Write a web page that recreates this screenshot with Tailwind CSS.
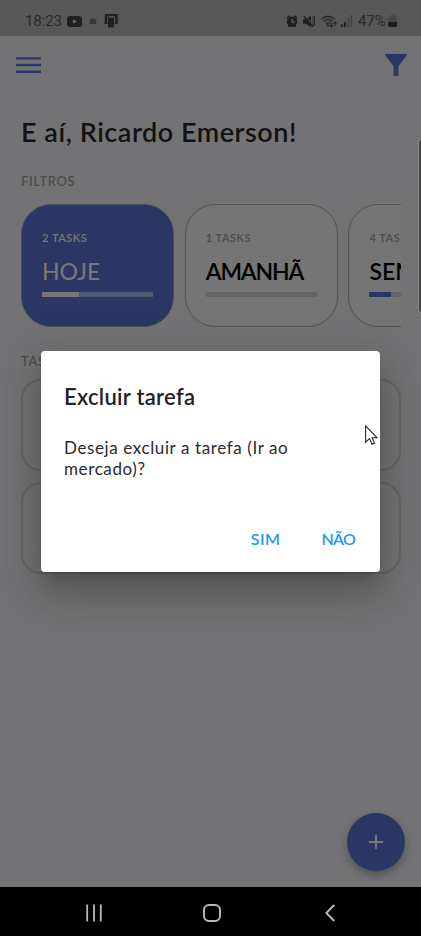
<!DOCTYPE html>
<html lang="pt-BR">
<head>
<meta charset="utf-8">
<meta name="viewport" content="width=device-width">
<title>Tarefas</title>
<script src="https://cdn.jsdelivr.net/npm/@tailwindcss/browser@4"></script>
</head>
<body class="overflow-hidden">
<div class="relative flex h-[936px] w-[421px] flex-col overflow-hidden bg-[#737375] font-['Lato','Noto_Sans',sans-serif] whitespace-nowrap">
  <!-- status bar -->
  <header class="flex h-9 shrink-0 items-center bg-[#575758] pt-[6px] pl-[25px] pr-[24px] font-['Roboto',sans-serif] text-[15px] text-[#2b2b2c]">
    <span class="w-[42px] tracking-[-0.1px]">18:23</span>
    <svg class="h-[11px] w-[15px]" viewBox="0 0 15 11"><rect width="15" height="11" rx="3" fill="#202021"/><path d="M5.8 3.2v4.6l4-2.3z" fill="#6a6a6b"/></svg>
    <svg class="ml-[7px] h-[7px] w-[8px]" viewBox="0 0 8 7"><path d="M1 3Q2 .5 4 1Q7 .5 7 3M1 3.4h6M.5 5.4h7M2 1v5M4 1v5M6 2v4" stroke="#303031" fill="none"/></svg>
    <svg class="ml-[7px] h-[14px] w-[14px]" viewBox="0 0 14 14"><path d="M2 9V1.200h10.500V9" fill="none" stroke="#202021" stroke-width="2.400"/><path d="M0 9.200h4M10.500 9.200h3.500" stroke="#202021" stroke-width="1.300"/><path d="M4 3h6v10.500h-6z" fill="#202021"/><path d="M5 3h4.500" stroke="#69696a"/></svg>
    <span class="grow"></span>
    <svg class="h-[13px] w-[12px]" viewBox="0 0 12 13"><path d="M.8 3.200l3-2.400M11.200 3.200l-3-2.400M2.500 12l1-2M9.500 12l-1-2" stroke="#202021" stroke-width="1.600"/><circle cx="6" cy="6.800" r="5.200" fill="#202021"/><path d="M6 4v3.200h2.500" stroke="#777" fill="none"/></svg>
    <svg class="ml-[5px] h-[13px] w-[12px]" viewBox="0 0 12 13"><path d="M0 4.300h3L8 .8v11.500L3 8.800H0z" fill="#202021"/><path d="M1.800 1l9 10.500" stroke="#575758" stroke-width="1.200"/><path d="M.8 1.200l9.500 10.500" stroke="#202021" stroke-width="1.500"/><path d="M9.500 1l1.200 1.700L9.500 4.400l1.200 1.700L9.500 8l1.200 2M11.500 1v10" stroke="#29292a" fill="none"/></svg>
    <svg class="ml-[6px] h-[13px] w-[16px]" viewBox="0 0 16 13"><path d="M.6 4.300Q7-1.600 13.400 4.300M2.800 6.500Q7 2.500 11.200 6.300M5 8.700Q7 6.700 9 8.500" fill="none" stroke="#29292a" stroke-width="1.400"/><circle cx="7" cy="10.500" r="1.200" fill="#29292a"/><path d="M10.400 7.500v4.300M8.900 10.200l1.500 1.900 1.500-1.900M14 11V7M12.500 8.800L14 6.800l1.500 2" fill="none" stroke="#29292a" stroke-width="1.100"/></svg>
    <svg class="ml-[4px] h-[12px] w-[12px]" viewBox="0 0 12 12"><path d="M1 12V9.500M4 12V6.700" stroke="#202021" stroke-width="1.800"/><path d="M7.400 12V3.800M10.400 12V0" stroke="#414142" stroke-width="1.600"/></svg>
    <span class="ml-[5px] w-[30px]">47%</span>
    <svg class="h-[12px] w-[9px]" viewBox="0 0 9 12"><path d="M2.500 0h4v1.500H9V10q0 2-2 2H2q-2 0-2-2V1.500h2.500z" fill="#464647"/><path d="M0 7h9v3q0 2-2 2H2q-2 0-2-2z" fill="#1b1b1c"/></svg>
  </header>
  <!-- app bar -->
  <nav class="flex h-[60px] shrink-0 items-start justify-between pr-3.5 pl-4">
    <svg class="mt-[21px] h-[16px] w-[25px]" viewBox="0 0 25 16"><path d="M0 1.400h25M0 8h25M0 14.700h25" stroke="#2a3663" stroke-width="2.400"/></svg>
    <svg class="mt-[18px] h-[22px] w-[22px]" viewBox="0 0 22 22"><path d="M.7 0h20.600q.9.500.4 1.400L13.500 12v10H8.500V12L.3 1.400Q-.2.500.7 0z" fill="#2a3663"/></svg>
  </nav>
  <main class="flex grow flex-col px-[21px]">
    <h1 class="mt-[18px] h-9 text-[27px] leading-9 font-semibold tracking-[0.53px] text-[#121213]">E aí, Ricardo Emerson!</h1>
    <h2 class="mt-[22px] h-[18px] text-[13px] leading-[18px] font-semibold tracking-[0.6px] text-[#4c4c4d]">FILTROS</h2>
    <div class="mt-[14px] flex h-[123px] w-[380px] shrink-0 gap-[10.7px] overflow-hidden">
      <article class="h-[123px] w-[153px] shrink-0 rounded-[30px] border border-[#4c4e56] bg-[#2a3663] px-[20px] pt-[25px]">
        <p class="h-4 text-[11px] leading-4 font-semibold tracking-[0.55px] text-[#7a7a7a]">2 TASKS</p>
        <h3 class="mt-[11px] h-7 text-[23px] leading-7 font-medium text-[#777776]">HOJE</h3>
        <div class="mt-[6.500px] h-[5px] w-[111px] bg-[#4c5c74]"><div class="h-full w-[37px] bg-[#777776]"></div></div>
      </article>
      <article class="h-[123px] w-[153px] shrink-0 rounded-[30px] border border-[#535354] bg-[#757576] px-[20px] pt-[25px]">
        <p class="h-4 text-[11px] leading-4 font-semibold tracking-[0.55px] text-[#4c4c4d]">1 TASKS</p>
        <h3 class="mt-[11px] h-7 text-[23px] leading-7 font-semibold tracking-[-1.1px] text-black">AMANHÃ</h3>
        <div class="mt-[6.500px] h-[5px] w-[111px] bg-[#656566]"></div>
      </article>
      <article class="h-[123px] w-[153px] shrink-0 rounded-[30px] border border-[#535354] bg-[#757576] px-[20px] pt-[25px]">
        <p class="h-4 text-[11px] leading-4 font-semibold tracking-[0.55px] text-[#4c4c4d]">4 TASKS</p>
        <h3 class="mt-[11px] h-7 text-[23px] leading-7 font-semibold text-black">SEMANA</h3>
        <div class="mt-[6.500px] h-[5px] w-[111px] bg-[#656566]"><div class="h-full w-[22px] bg-[#2a3663]"></div></div>
      </article>
    </div>
    <h2 class="mt-[25px] h-[18px] text-[13px] leading-[18px] font-semibold tracking-[0.6px] text-[#4c4c4d]">TASKS DE HOJE</h2>
    <div class="mt-[9px] flex flex-col gap-[11px]">
      <div class="h-[92px] w-[380px] rounded-[20px] border-2 border-[#666667] bg-[#747475]"></div>
      <div class="h-[92px] w-[380px] rounded-[20px] border-2 border-[#666667] bg-[#747475]"></div>
    </div>
  </main>
  <!-- system navigation -->
  <footer class="flex h-[49px] shrink-0 items-center bg-black pt-[3px] pl-[86px]">
    <svg class="h-[18px] w-[16px]" viewBox="0 0 16 18"><path d="M1.200 .5v17M8 .5v17M14.800 .5v17" stroke="#b8b8b8" stroke-width="1.800"/></svg>
    <svg class="ml-[101px] h-[18px] w-[18px]" viewBox="0 0 18 18"><rect x="1" y="1" width="16" height="16" rx="5" fill="none" stroke="#b8b8b8" stroke-width="2"/></svg>
    <svg class="ml-[104px] h-[18px] w-[10px]" viewBox="0 0 10 18"><path d="M9.200 1L1.300 9l7.900 8" fill="none" stroke="#b8b8b8" stroke-width="2"/></svg>
  </footer>
  <!-- scrollbar -->
  <div class="absolute top-[139px] left-[418px] h-[174px] w-[6px] rounded-[3px] border border-[#8a8a8a] bg-[#444445]"></div>
  <!-- add button -->
  <button class="absolute top-[813px] left-[347px] flex h-[58px] w-[58px] items-center justify-center rounded-full bg-[#2a3663] shadow-[0_4px_8px_rgba(0,0,0,0.3)]">
    <svg class="h-[14px] w-[14px]" viewBox="0 0 14 14"><path d="M0 7h14M7 0v14" stroke="#777" stroke-width="1.900"/></svg>
  </button>
  <!-- dialog -->
  <section class="absolute top-[351px] left-[41px] flex h-[221px] w-[339px] flex-col rounded-[4px] bg-white px-[23px] pt-[30px] shadow-[0_11px_15px_-7px_rgba(0,0,0,0.2),0_24px_38px_3px_rgba(0,0,0,0.14),0_9px_46px_8px_rgba(0,0,0,0.12)]">
    <h2 class="h-8 text-[22px] leading-8 font-semibold tracking-[0.28px] text-[#222223]">Excluir tarefa</h2>
    <p class="mt-[24px] text-[17px] leading-[21px] tracking-[0.61px] text-[#2b2b2c]">Deseja excluir a tarefa (Ir ao<br>mercado)?</p>
    <div class="mt-[46px] flex h-7 items-center justify-end gap-[41px] pr-[2px] text-[16px] font-semibold text-[#2196f3]"><button class="tracking-[0.5px]">SIM</button><button class="tracking-[-0.8px]">NÃO</button></div>
  </section>
  <!-- pointer -->
  <svg class="absolute top-[425px] left-[365px] h-[20px] w-[13px]" viewBox="0 0 13 20"><path d="M.6 .8v16.400l3.900-3.600 2.500 5.600 2.500-1.100-2.400-5.300h5z" fill="#fff" stroke="#26262e" stroke-width="1.100"/></svg>
</div>
</body>
</html>
